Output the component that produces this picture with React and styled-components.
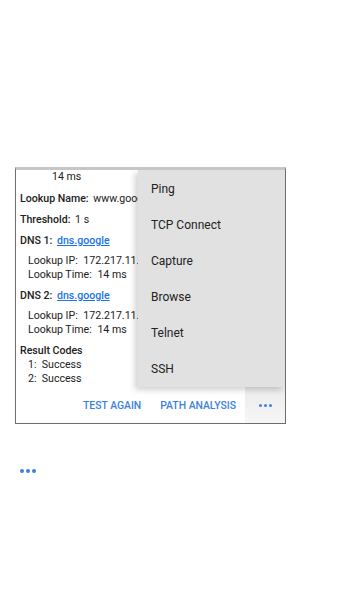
import React from 'react'
import styled, { createGlobalStyle } from 'styled-components'

const GlobalStyle = createGlobalStyle`
  body {
    margin: 0;
    background: #ffffff;
    font-family: Roboto, "Liberation Sans", sans-serif;
    color: #212121;
  }
`

const Page = styled.div`
  width: 360px;
  height: 612px;
  padding: 167px 0 0 15px;
  box-sizing: border-box;
`

const Frame = styled.div`
  position: relative;
  width: 271px;
  height: 257px;
  box-sizing: border-box;
  border: 1px solid #6e6e6e;
  border-top: 3px solid #c6c6c6;
  display: flex;
  flex-direction: column;
  overflow: hidden;
`

const Results = styled.div`
  flex: 1;
  padding-left: 4px;
  font-size: 10.6px;
  line-height: 14px;
  white-space: nowrap;
`

const Row = styled.div`
  margin-top: ${p => p.$gap || 0}px;
  padding-left: ${p => p.$indent || 0}px;
`

const Label = styled.span`
  font-weight: 500;
  margin-right: 2px;
`

const SubLabel = styled.span`
  margin-right: 3px;
`

const Link = styled.a`
  color: #1a73e8;
  font-weight: 500;
  text-decoration: underline;
`

const Actions = styled.div`
  height: 36px;
  display: flex;
  align-items: center;
  justify-content: flex-end;
  gap: 19px;
`

const TextButton = styled.span`
  font-size: 10.4px;
  font-weight: 500;
  color: #3b82e0;
`

const MoreButton = styled.div`
  width: 40px;
  height: 36px;
  margin-left: -10px;
  background: linear-gradient(#ececec, #f6f6f6);
  display: flex;
  align-items: center;
  justify-content: center;
  gap: 2px;
`

const Dot = styled.span`
  width: ${p => p.$size}px;
  height: ${p => p.$size}px;
  border-radius: 50%;
  background: #3b82e0;
`

const Menu = styled.div`
  position: absolute;
  top: 0;
  right: 0;
  width: 147px;
  padding-top: 1px;
  background: #e1e1e1;
  box-shadow: -3px 3px 6px rgba(0, 0, 0, 0.18);
`

const MenuItem = styled.div`
  height: 36px;
  display: flex;
  align-items: center;
  padding-left: 13px;
  font-size: 12px;
  color: #222;
`

const Overflow = styled.div`
  display: flex;
  gap: 2px;
  margin: 45px 0 0 5px;
`

const menuItems = ['Ping', 'TCP Connect', 'Capture', 'Browse', 'Telnet', 'SSH']

function Dots({ size }) {
  return (
    <>
      <Dot $size={size} />
      <Dot $size={size} />
      <Dot $size={size} />
    </>
  )
}

export default function App() {
  return (
    <Page>
      <GlobalStyle />
      <Frame>
        <Results>
          <Row $indent={32}>14 ms</Row>
          <Row $gap={8}><Label>Lookup Name:</Label> www.google.com</Row>
          <Row $gap={7}><Label>Threshold:</Label> 1 s</Row>
          <Row $gap={7}><Label>DNS 1:</Label> <Link>dns.google</Link></Row>
          <Row $gap={6} $indent={8}><SubLabel>Lookup IP:</SubLabel> 172.217.11.4</Row>
          <Row $indent={8}><SubLabel>Lookup Time:</SubLabel> 14 ms</Row>
          <Row $gap={7}><Label>DNS 2:</Label> <Link>dns.google</Link></Row>
          <Row $gap={6} $indent={8}><SubLabel>Lookup IP:</SubLabel> 172.217.11.4</Row>
          <Row $indent={8}><SubLabel>Lookup Time:</SubLabel> 14 ms</Row>
          <Row $gap={7}><Label>Result Codes</Label></Row>
          <Row $indent={8}>1:&nbsp;&nbsp;Success</Row>
          <Row $indent={8}>2:&nbsp;&nbsp;Success</Row>
        </Results>
        <Actions>
          <TextButton>TEST AGAIN</TextButton>
          <TextButton>PATH ANALYSIS</TextButton>
          <MoreButton><Dots size={3} /></MoreButton>
        </Actions>
        <Menu>
          {menuItems.map(item => <MenuItem key={item}>{item}</MenuItem>)}
        </Menu>
      </Frame>
      <Overflow><Dots size={4} /></Overflow>
    </Page>
  )
}
